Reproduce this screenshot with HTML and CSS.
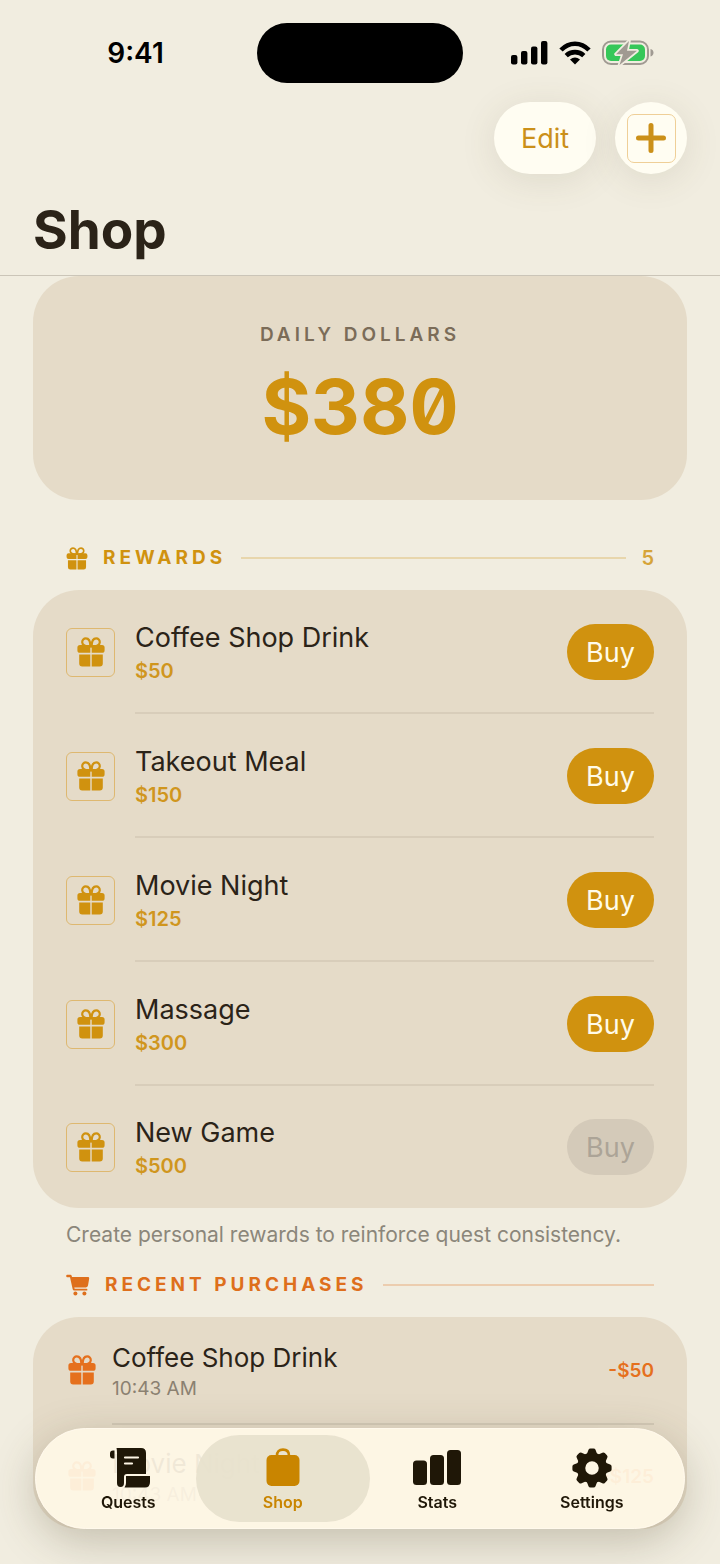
FILE: index.html
```html
<!DOCTYPE html>
<html lang="en">
<head>
  <meta charset="UTF-8">
  <title>Shop</title>
  <meta name="viewport" content="width=device-width, initial-scale=1.0">
  <link rel="stylesheet" href="styles.css">
</head>
<body>
  <!-- Icon sprite -->
  <svg class="sprite" width="0" height="0" aria-hidden="true">
    <symbol id="gift" viewBox="0 0 28 30">
      <g fill="none" stroke="currentColor" stroke-width="2.2">
        <path d="M13.4 9.4C8.500 9.800 5.200 8 5.200 5.200C5.200 2.900 6.800 1.400 8.800 1.400C11.600 1.400 13.400 4.500 13.400 9.400Z"/>
        <path d="M14.600 9.400C19.500 9.800 22.800 8 22.800 5.200C22.800 2.900 21.200 1.400 19.200 1.400C16.400 1.400 14.600 4.500 14.600 9.400Z"/>
      </g>
      <path fill="currentColor" d="M3 8H13.300V15.800H3Q.4 15.800 .4 13.200V10.600Q.4 8 3 8ZM14.700 8H25Q27.600 8 27.600 10.600V13.200Q27.600 15.800 25 15.800H14.700ZM2.200 17.400H13.300V29.400H5.200Q2.200 29.400 2.200 26.400ZM14.700 17.400H25.800V26.400Q25.800 29.400 22.800 29.400H14.700Z"/>
    </symbol>
    <symbol id="cart" viewBox="0 0 24 22">
      <path fill="currentColor" d="M1.200 .8H4.300Q5.500 .8 5.800 2.200L6 3H22Q23.400 3 23.200 4.400L22 11.600Q21.700 13.400 20 13.400H8.300L8.600 14.800H20.600Q21.400 14.800 21.400 15.700Q21.400 16.600 20.600 16.600H8.200Q7 16.600 6.700 15.300L4 3.200H1.200Q.2 3.200 .2 2Q.2 .8 1.200 .8Z"/>
      <circle cx="9.400" cy="19.600" r="2" fill="currentColor"/>
      <circle cx="18.400" cy="19.600" r="2" fill="currentColor"/>
    </symbol>
  </svg>

  <header class="top">
    <div class="status">
      <time class="clock">9:41</time>
      <div class="island"></div>
      <div class="signals">
        <svg width="37" height="24" viewBox="0 0 37 24" aria-hidden="true">
          <rect x="0" y="14" width="6.400" height="9.500" rx="2"/>
          <rect x="10" y="10" width="6.400" height="13.500" rx="2"/>
          <rect x="20" y="5.500" width="6.400" height="18" rx="2"/>
          <rect x="30" y="0" width="6.400" height="23.500" rx="2"/>
        </svg>
        <svg width="32" height="24" viewBox="0 0 32 24" aria-hidden="true">
          <g fill="none" stroke="#000" stroke-width="4.600">
            <path d="M2 9C10 .6 22 .6 30 9"/>
            <path d="M7.200 14.600C12 10 20 10 24.800 14.600"/>
          </g>
          <path d="M11 18.600Q16 14.400 21 18.600L16 23.600Z"/>
        </svg>
        <svg width="52" height="26" viewBox="0 0 52 26" aria-hidden="true">
          <rect x="1" y="1.500" width="45" height="22.500" rx="8" fill="none" stroke="#a09a92" stroke-width="2"/>
          <rect x="4" y="4.500" width="39" height="16.500" rx="5" fill="#36c759"/>
          <path d="M48.500 9Q51.500 9.800 51.500 12.700T48.500 16.400Z" fill="#a09a92"/>
          <path d="M27 1L14 14.200H21L17.500 25L35 10.800H25Z" fill="#a09a92" stroke="#f1ede0" stroke-width="3.500" stroke-linejoin="round" paint-order="stroke"/>
        </svg>
      </div>
    </div>
    <div class="actions">
      <button class="edit" type="button">Edit</button>
      <button class="add" type="button" aria-label="Add reward">
        <span class="add-box">
          <svg width="30" height="30" viewBox="0 0 30 30" aria-hidden="true">
            <path d="M15 2.500V27.500M2.500 15H27.500" stroke="currentColor" stroke-width="5" stroke-linecap="round"/>
          </svg>
        </span>
      </button>
    </div>
    <h1>Shop</h1>
  </header>

  <main>
    <section class="card balance">
      <h2 class="balance-label">DAILY DOLLARS</h2>
      <p class="balance-value">$380</p>
    </section>

    <section>
      <div class="section-head rewards-head">
        <svg width="22" height="23" aria-hidden="true"><use href="#gift"/></svg>
        <h2>REWARDS</h2>
        <span class="rule"></span>
        <span class="count">5</span>
      </div>
      <ul class="card rewards">
        <li class="reward">
          <span class="icon-box"><svg width="28" height="30" aria-hidden="true"><use href="#gift"/></svg></span>
          <div class="reward-body">
            <div><h3>Coffee Shop Drink</h3><p class="price">$50</p></div>
            <button class="buy" type="button">Buy</button>
          </div>
        </li>
        <li class="reward">
          <span class="icon-box"><svg width="28" height="30" aria-hidden="true"><use href="#gift"/></svg></span>
          <div class="reward-body">
            <div><h3>Takeout Meal</h3><p class="price">$150</p></div>
            <button class="buy" type="button">Buy</button>
          </div>
        </li>
        <li class="reward">
          <span class="icon-box"><svg width="28" height="30" aria-hidden="true"><use href="#gift"/></svg></span>
          <div class="reward-body">
            <div><h3>Movie Night</h3><p class="price">$125</p></div>
            <button class="buy" type="button">Buy</button>
          </div>
        </li>
        <li class="reward">
          <span class="icon-box"><svg width="28" height="30" aria-hidden="true"><use href="#gift"/></svg></span>
          <div class="reward-body">
            <div><h3>Massage</h3><p class="price">$300</p></div>
            <button class="buy" type="button">Buy</button>
          </div>
        </li>
        <li class="reward">
          <span class="icon-box"><svg width="28" height="30" aria-hidden="true"><use href="#gift"/></svg></span>
          <div class="reward-body">
            <div><h3>New Game</h3><p class="price">$500</p></div>
            <button class="buy" type="button" disabled>Buy</button>
          </div>
        </li>
      </ul>
      <p class="note">Create personal rewards to reinforce quest consistency.</p>
    </section>

    <section>
      <div class="section-head recent-head">
        <svg width="24" height="22" aria-hidden="true"><use href="#cart"/></svg>
        <h2>RECENT PURCHASES</h2>
        <span class="rule"></span>
      </div>
      <ul class="card recent">
        <li class="purchase">
          <svg width="28" height="30" aria-hidden="true"><use href="#gift"/></svg>
          <div class="purchase-body">
            <div><h3>Coffee Shop Drink</h3><p class="when">10:43 AM</p></div>
            <span class="amount">-$50</span>
          </div>
        </li>
        <li class="purchase">
          <svg width="28" height="30" aria-hidden="true"><use href="#gift"/></svg>
          <div class="purchase-body">
            <div><h3>Movie Night</h3><p class="when">10:43 AM</p></div>
            <span class="amount">-$125</span>
          </div>
        </li>
      </ul>
    </section>
  </main>

  <nav class="tabs">
    <a class="tab" href="#quests">
      <svg width="44" height="40" viewBox="-4 0 44 40" aria-hidden="true">
        <path fill="currentColor" d="M6.500 0H31Q36 0 36 5V26H17Q14 26 14 29V35Q14 39 10.500 39Q7 39 7 35V5Q7 2 6.500 0ZM4.500 2.500V10.500H3Q0 10.500 0 7.500V5.500Q0 2.500 3 2.500ZM16 28H40V34Q40 39.500 35 39.500H14.500Q16 37.500 16 35Z"/>
        <path d="M15 9.500H28M15 15.500H22" stroke="#fef6e5" stroke-width="2.200" stroke-linecap="round"/>
      </svg>
      Quests
    </a>
    <a class="tab active" href="#shop" aria-current="page">
      <svg width="40" height="40" viewBox="0 0 40 40" aria-hidden="true">
        <rect x="3.500" y="7" width="33" height="31" rx="5" fill="currentColor"/>
        <path d="M14 8V7.500Q14 1.600 20 1.600T26 7.500V8" fill="none" stroke="currentColor" stroke-width="2.600"/>
      </svg>
      Shop
    </a>
    <a class="tab" href="#stats">
      <svg width="48" height="40" viewBox="0 0 48 40" aria-hidden="true" fill="currentColor">
        <rect x="0" y="12.500" width="14" height="24.500" rx="3.500"/>
        <rect x="17" y="7" width="14" height="30" rx="3.500"/>
        <rect x="34" y="2" width="14" height="35" rx="3.500"/>
      </svg>
      Stats
    </a>
    <a class="tab" href="#settings">
      <svg width="40" height="40" viewBox="0 0 40 40" aria-hidden="true">
        <circle cx="20" cy="20" r="11" fill="none" stroke="currentColor" stroke-width="8.500"/>
        <g fill="currentColor">
          <path id="tooth" d="M14.500 7L16.500 1.800Q17 .4 18.500 .4H21.500Q23 .4 23.500 1.800L25.500 7Z"/>
          <use href="#tooth" transform="rotate(45 20 20)"/>
          <use href="#tooth" transform="rotate(90 20 20)"/>
          <use href="#tooth" transform="rotate(135 20 20)"/>
          <use href="#tooth" transform="rotate(180 20 20)"/>
          <use href="#tooth" transform="rotate(225 20 20)"/>
          <use href="#tooth" transform="rotate(270 20 20)"/>
          <use href="#tooth" transform="rotate(315 20 20)"/>
        </g>
      </svg>
      Settings
    </a>
  </nav>
</body>
</html>
```
FILE: styles.css
```css
* {
  box-sizing: border-box;
}

body {
  margin: 0;
  min-height: 100vh;
  background: #f1ede0;
  color: #2b2318;
  font-family: Inter, Roboto, sans-serif;
}

h1, h2, h3, p, ul {
  margin: 0;
  padding: 0;
}

ul {
  list-style: none;
}

button {
  border: 0;
  padding: 0;
  font: inherit;
}

.sprite {
  position: absolute;
}

/* Header */
.top {
  position: sticky;
  top: 0;
  z-index: 2;
  background: #f1ede0;
  border-bottom: 1px solid #cbc5b8;
}

.status {
  display: grid;
  grid-template-columns: 1fr 206px 1fr;
  align-items: center;
  padding: 23px 0 19px;
}

.clock {
  padding-left: 14px;
  text-align: center;
  font-size: 28px;
  font-weight: 600;
  color: #000;
}

.island {
  height: 60px;
  border-radius: 30px;
  background: #000;
}

.signals {
  display: flex;
  align-items: center;
  justify-content: center;
  gap: 11px;
  padding-right: 19px;
}

.actions {
  display: flex;
  justify-content: flex-end;
  gap: 19px;
  padding: 0 33px;
}

.edit, .add {
  height: 72px;
  border-radius: 36px;
  background: #fffdf2;
  color: #cb9019;
  box-shadow: 0 6px 36px rgba(90, 80, 50, 0.12);
}

.edit {
  width: 102px;
  font-size: 27px;
}

.add {
  display: grid;
  place-items: center;
  width: 72px;
}

.add-box {
  display: grid;
  place-items: center;
  width: 49px;
  height: 49px;
  border: 1px solid #efcf97;
  border-radius: 7px;
}

h1 {
  padding: 24px 33px 13px;
  font-size: 53px;
  line-height: 64px;
  font-weight: 700;
}

/* Content */
main {
  padding: 0 33px 32px;
}

.card {
  border-radius: 46px;
  background: #e5dbc8;
}

.balance {
  padding: 47px 33px;
  text-align: center;
}

.balance-label {
  font-size: 19px;
  line-height: 24px;
  font-weight: 600;
  letter-spacing: 4px;
  color: #7b6c58;
}

.balance-value {
  margin-top: 12px;
  font-size: 76px;
  line-height: 94px;
  font-weight: 700;
  font-feature-settings: "tnum", "zero";
  color: #d0920f;
}

.section-head {
  display: flex;
  align-items: center;
  gap: 15px;
  padding: 0 33px;
  font-size: 20px;
  line-height: 24px;
}

.section-head h2 {
  font-size: 19px;
  font-weight: 700;
  letter-spacing: 4px;
}

.rule {
  flex: 1;
  height: 2px;
  background: currentColor;
  opacity: 0.25;
}

.rewards-head {
  padding-top: 46px;
  padding-bottom: 20px;
  color: #d0920f;
}

.count {
  font-weight: 600;
  opacity: 0.8;
}

.recent-head {
  padding-top: 25px;
  padding-bottom: 20px;
  color: #de6f1c;
}

.reward {
  display: flex;
  align-items: center;
  gap: 20px;
  padding: 0 33px;
}

.icon-box {
  display: grid;
  place-items: center;
  width: 49px;
  height: 49px;
  border: 1px solid #deb870;
  border-radius: 6px;
  color: #d0920f;
}

.reward-body, .purchase-body {
  flex: 1;
  display: flex;
  align-items: center;
  justify-content: space-between;
}

.reward-body {
  height: 124px;
}

.reward:last-child .reward-body {
  height: 122px;
}

.reward + .reward .reward-body {
  box-shadow: 0 -2px #d8cdba;
}

h3 {
  font-size: 27px;
  line-height: 34px;
  font-weight: 400;
}

.price {
  margin-top: 3px;
  font-size: 20px;
  line-height: 26px;
  font-weight: 600;
  color: #d0961e;
}

.buy {
  width: 87px;
  height: 56px;
  border-radius: 28px;
  background: #d0920f;
  color: #fffbe9;
  font-size: 27px;
}

.buy:disabled {
  background: #d4cab9;
  color: #aca497;
}

.note {
  padding: 14px 33px 0;
  font-size: 21px;
  line-height: 26px;
  color: #8b867a;
}

.purchase {
  display: flex;
  align-items: center;
  gap: 16px;
  padding: 0 33px 0 35px;
  color: #e5701d;
}

.purchase-body {
  height: 106px;
}

.purchase + .purchase .purchase-body {
  box-shadow: inset 0 2px #d3c9b7;
}

.purchase h3 {
  font-size: 26px;
  line-height: 38px;
  color: #2b2318;
}

.when {
  font-size: 19px;
  line-height: 24px;
  color: #8b8171;
}

.amount {
  font-size: 19px;
  font-weight: 600;
}

/* Tab bar */
.tabs {
  position: fixed;
  right: 35px;
  bottom: 35px;
  left: 35px;
  z-index: 3;
  display: flex;
  padding: 6px 15px;
  border: 1px solid #fff9ec;
  border-radius: 51px;
  background: rgba(255, 247, 230, 0.93);
  box-shadow: 0 12px 44px rgba(80, 70, 40, 0.28);
}

.tab {
  position: relative;
  z-index: 1;
  flex: 1;
  display: flex;
  flex-direction: column;
  align-items: center;
  gap: 4px;
  height: 87px;
  padding-top: 13px;
  font-size: 16px;
  line-height: 20px;
  font-weight: 600;
  color: #1f1707;
  text-decoration: none;
}

.tab.active {
  color: #c98500;
}

/* Highlight reaches slightly into the neighbouring tabs */
.tab.active::before {
  content: "";
  position: absolute;
  inset: 0 -10px;
  z-index: -1;
  border-radius: 44px;
  background: rgba(232, 226, 206, 0.95);
}
```
